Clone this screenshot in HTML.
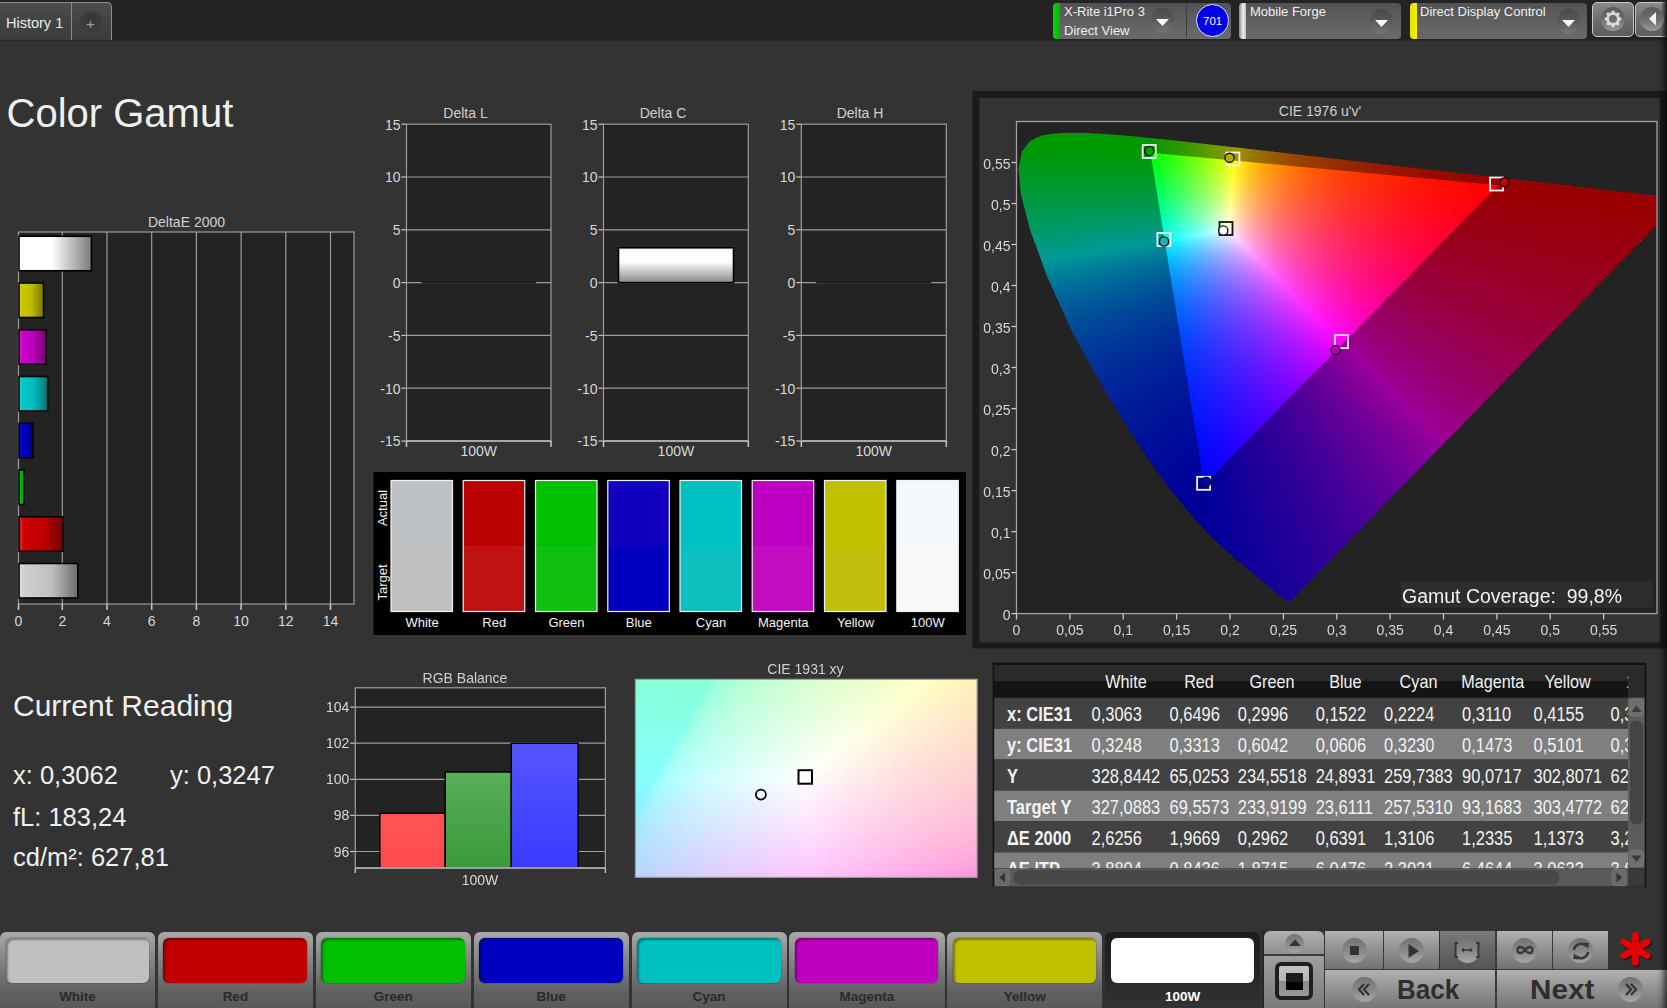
<!DOCTYPE html>
<html><head><meta charset="utf-8"><title>Color Gamut</title>
<style>
html,body{margin:0;padding:0;width:1667px;height:1008px;overflow:hidden;background:#333333;font-family:"Liberation Sans",sans-serif}
.abs{position:absolute}
.t{white-space:pre;line-height:1}
.dev{position:absolute;top:2.5px;height:36px;border-radius:4px;background:linear-gradient(#525252,#5e5e5e 40%,#6a6a6a)}
.ddc{position:absolute;width:23px;height:25px;border-radius:50%;background:linear-gradient(#484848,#5a5a5a 50%,#767676)}
.ci{position:absolute;border-radius:50%;background:linear-gradient(#727272,#888 50%,#a6a6a6)}
svg text{font-family:"Liberation Sans",sans-serif}
</style></head><body>
<div class="abs" style="left:0;top:0;width:1667px;height:40px;background:#232323"></div><div class="abs" style="left:0;top:40px;width:1667px;height:1px;background:#2b2b2b"></div>
<div class="abs" style="left:-6px;top:2px;width:118px;height:38px;border:1px solid #8e8e8e;border-bottom:none;border-radius:0 5px 0 0;background:linear-gradient(#4c4c4c,#3b3b3b);box-sizing:border-box"></div>
<div class="abs" style="left:71px;top:3px;width:1px;height:37px;background:#8a8a8a"></div>
<div class="abs" style="left:78.5px;top:11px;width:24px;height:24px;border-radius:50%;background:radial-gradient(circle at 50% 40%,#363636,#3e3e3e 70%,#474747)"></div>
<div class="abs t" style="left:6px;top:15.5px;font-size:14.5px;color:#ececec">History 1</div>
<div class="abs t" style="left:84px;top:12px;font-size:15px;color:#a0a0a0;line-height:24px;width:13px;text-align:center">+</div>
<div class="dev" style="left:1053px;width:178px"></div>
<div class="abs" style="left:1053px;top:2.5px;width:7px;height:36px;background:linear-gradient(90deg,#10d010,#00b800);border-radius:4px 0 0 4px"></div>
<div class="abs t" style="left:1064px;top:1.8px;font-size:13px;color:#f0f0f0;line-height:19px">X-Rite i1Pro 3<br>Direct View</div>
<div class="ddc" style="left:1150.8px;top:8.0px"></div><svg class="abs" style="left:1155.8px;top:19.0px" width="13" height="8"><path d="M0 0 H13 L6.5 7 Z" fill="#f8f8f8"/></svg>
<div class="abs" style="left:1186px;top:3px;width:1px;height:35px;background:#3e3e3e"></div>
<div class="abs" style="left:1196.3px;top:4.2px;width:32.6px;height:32.6px;border-radius:50%;background:#0000e6;border:1.2px solid #e8e8ff;box-sizing:border-box"></div>
<div class="abs t" style="left:1196.3px;top:5.2px;width:32.6px;line-height:32.6px;text-align:center;font-size:11.5px;color:#fff">701</div>
<div class="dev" style="left:1239px;width:162px"></div>
<div class="abs" style="left:1239px;top:2.5px;width:7px;height:36px;background:linear-gradient(90deg,#8a8a8a,#f0f0f0 60%,#bdbdbd);border-radius:4px 0 0 4px"></div>
<div class="abs t" style="left:1250px;top:1.8px;font-size:13px;color:#f0f0f0;line-height:19px">Mobile Forge</div>
<div class="ddc" style="left:1369.5px;top:8.5px"></div><svg class="abs" style="left:1374.5px;top:19.5px" width="13" height="8"><path d="M0 0 H13 L6.5 7 Z" fill="#f8f8f8"/></svg>
<div class="dev" style="left:1410px;width:177px"></div>
<div class="abs" style="left:1410px;top:2.5px;width:6.5px;height:36px;background:linear-gradient(90deg,#e0e000,#f4f400);border-radius:4px 0 0 4px"></div>
<div class="abs t" style="left:1420px;top:1.8px;font-size:13px;color:#f0f0f0;line-height:19px">Direct Display Control</div>
<div class="ddc" style="left:1556.5px;top:9.0px"></div><svg class="abs" style="left:1561.5px;top:20.0px" width="13" height="8"><path d="M0 0 H13 L6.5 7 Z" fill="#f8f8f8"/></svg>
<div class="abs" style="left:1592px;top:2px;width:42px;height:35px;border:1px solid #c8c8c8;border-radius:5px;background:linear-gradient(#8a8a8a,#6a6a6a 55%,#5e5e5e);box-sizing:border-box"></div>
<div class="abs" style="left:1601px;top:7px;width:24px;height:24px;border-radius:50%;background:linear-gradient(#5a5a5a,#6c6c6c 50%,#9a9a9a)"></div>
<svg class="abs" style="left:1593px;top:-1px" width="40" height="40"><g transform="translate(20,20)"><rect x="-1.5" y="-8.3" width="3" height="3.6" rx="0.5" transform="rotate(0)" fill="#dcdcdc"/><rect x="-1.5" y="-8.3" width="3" height="3.6" rx="0.5" transform="rotate(45)" fill="#dcdcdc"/><rect x="-1.5" y="-8.3" width="3" height="3.6" rx="0.5" transform="rotate(90)" fill="#dcdcdc"/><rect x="-1.5" y="-8.3" width="3" height="3.6" rx="0.5" transform="rotate(135)" fill="#dcdcdc"/><rect x="-1.5" y="-8.3" width="3" height="3.6" rx="0.5" transform="rotate(180)" fill="#dcdcdc"/><rect x="-1.5" y="-8.3" width="3" height="3.6" rx="0.5" transform="rotate(225)" fill="#dcdcdc"/><rect x="-1.5" y="-8.3" width="3" height="3.6" rx="0.5" transform="rotate(270)" fill="#dcdcdc"/><rect x="-1.5" y="-8.3" width="3" height="3.6" rx="0.5" transform="rotate(315)" fill="#dcdcdc"/><circle r="5.4" fill="none" stroke="#dcdcdc" stroke-width="2.7"/></g></svg>
<div class="abs" style="left:1635px;top:2px;width:40px;height:35px;border:1px solid #c8c8c8;border-radius:5px;background:linear-gradient(#8a8a8a,#6a6a6a 55%,#5e5e5e);box-sizing:border-box"></div><div class="abs" style="left:1661px;top:2px;width:6px;height:36px;background:linear-gradient(90deg,rgba(20,20,20,0),#141414)"></div>
<div class="abs" style="left:1639.5px;top:7px;width:24px;height:24px;border-radius:50%;background:linear-gradient(#5a5a5a,#6c6c6c 50%,#9a9a9a)"></div>
<svg class="abs" style="left:1647px;top:11px" width="12" height="17"><path d="M9 1 V14.5 L2 7.8 Z" fill="#f0f0f0"/></svg>
<svg class="abs" style="left:0;top:0" width="1667" height="1008" viewBox="0 0 1667 1008">
<defs><linearGradient id="bw" x1="0" y1="0" x2="1" y2="0"><stop offset="0" stop-color="#ffffff"/><stop offset="0.45" stop-color="#ffffff"/><stop offset="1" stop-color="#7c7c7c"/></linearGradient><linearGradient id="bw2" x1="0" y1="0" x2="1" y2="0"><stop offset="0" stop-color="#dcdcdc"/><stop offset="0.1" stop-color="#cfcfcf"/><stop offset="0.55" stop-color="#c0c0c0"/><stop offset="1" stop-color="#6c6c6c"/></linearGradient><linearGradient id="by" x1="0" y1="0" x2="1" y2="0"><stop offset="0" stop-color="#d0d010"/><stop offset="0.15" stop-color="#c8c800"/><stop offset="0.5" stop-color="#bcbc00"/><stop offset="1" stop-color="#7a7400"/></linearGradient><linearGradient id="bm" x1="0" y1="0" x2="1" y2="0"><stop offset="0" stop-color="#d020d0"/><stop offset="0.15" stop-color="#c800c8"/><stop offset="0.5" stop-color="#bc00bc"/><stop offset="1" stop-color="#760076"/></linearGradient><linearGradient id="bc" x1="0" y1="0" x2="1" y2="0"><stop offset="0" stop-color="#20d0d0"/><stop offset="0.15" stop-color="#00c8c8"/><stop offset="0.5" stop-color="#00bcbc"/><stop offset="1" stop-color="#007676"/></linearGradient><linearGradient id="bb" x1="0" y1="0" x2="1" y2="0"><stop offset="0" stop-color="#2020d0"/><stop offset="0.15" stop-color="#0000c8"/><stop offset="0.5" stop-color="#0000bc"/><stop offset="1" stop-color="#000076"/></linearGradient><linearGradient id="bg" x1="0" y1="0" x2="1" y2="0"><stop offset="0" stop-color="#20d020"/><stop offset="0.15" stop-color="#00c800"/><stop offset="0.5" stop-color="#00bc00"/><stop offset="1" stop-color="#007600"/></linearGradient><linearGradient id="br" x1="0" y1="0" x2="1" y2="0"><stop offset="0" stop-color="#e03030"/><stop offset="0.12" stop-color="#cc0000"/><stop offset="0.55" stop-color="#c00000"/><stop offset="1" stop-color="#700000"/></linearGradient><linearGradient id="bv" x1="0" y1="0" x2="0" y2="1"><stop offset="0" stop-color="#ffffff"/><stop offset="0.4" stop-color="#ffffff"/><stop offset="1" stop-color="#888888"/></linearGradient><linearGradient id="rr" x1="0" y1="0" x2="0" y2="1"><stop offset="0" stop-color="#ff5555"/><stop offset="1" stop-color="#ff4a4a"/></linearGradient><linearGradient id="rg" x1="0" y1="0" x2="0" y2="1"><stop offset="0" stop-color="#5aae5a"/><stop offset="1" stop-color="#3a9a3a"/></linearGradient><linearGradient id="rb" x1="0" y1="0" x2="0" y2="1"><stop offset="0" stop-color="#5555ff"/><stop offset="1" stop-color="#3a3aff"/></linearGradient></defs>
<text x="6.5" y="127" font-size="40" fill="#f0f0f0">Color Gamut</text><text x="13" y="716" font-size="30" fill="#f0f0f0">Current Reading</text><text x="13" y="784" font-size="25.5" fill="#f0f0f0">x: 0,3062</text><text x="170" y="784" font-size="25.5" fill="#f0f0f0">y: 0,3247</text><text x="13" y="825.5" font-size="25.5" fill="#f0f0f0">fL: 183,24</text><text x="13" y="865.5" font-size="25.5" fill="#f0f0f0">cd/m²: 627,81</text>
<text x="186.5" y="226.5" font-size="14" fill="#d0d0d0" text-anchor="middle" font-weight="400" >DeltaE 2000</text>
<rect x="18.5" y="232" width="335.5" height="372" fill="#232323" stroke="#9c9c9c" stroke-width="1.2"/>
<line x1="62.3" y1="232" x2="62.3" y2="604" stroke="#9c9c9c" stroke-width="1.2"/>
<line x1="107.0" y1="232" x2="107.0" y2="604" stroke="#9c9c9c" stroke-width="1.2"/>
<line x1="151.7" y1="232" x2="151.7" y2="604" stroke="#9c9c9c" stroke-width="1.2"/>
<line x1="196.4" y1="232" x2="196.4" y2="604" stroke="#9c9c9c" stroke-width="1.2"/>
<line x1="241.1" y1="232" x2="241.1" y2="604" stroke="#9c9c9c" stroke-width="1.2"/>
<line x1="285.8" y1="232" x2="285.8" y2="604" stroke="#9c9c9c" stroke-width="1.2"/>
<line x1="330.5" y1="232" x2="330.5" y2="604" stroke="#9c9c9c" stroke-width="1.2"/>
<line x1="18.5" y1="604" x2="18.5" y2="610" stroke="#c8c8c8" stroke-width="1.5"/>
<text x="18.5" y="625.5" font-size="14" fill="#d8d8d8" text-anchor="middle" font-weight="400" >0</text>
<line x1="62.3" y1="604" x2="62.3" y2="610" stroke="#c8c8c8" stroke-width="1.5"/>
<text x="62.3" y="625.5" font-size="14" fill="#d8d8d8" text-anchor="middle" font-weight="400" >2</text>
<line x1="107.0" y1="604" x2="107.0" y2="610" stroke="#c8c8c8" stroke-width="1.5"/>
<text x="107.0" y="625.5" font-size="14" fill="#d8d8d8" text-anchor="middle" font-weight="400" >4</text>
<line x1="151.7" y1="604" x2="151.7" y2="610" stroke="#c8c8c8" stroke-width="1.5"/>
<text x="151.7" y="625.5" font-size="14" fill="#d8d8d8" text-anchor="middle" font-weight="400" >6</text>
<line x1="196.4" y1="604" x2="196.4" y2="610" stroke="#c8c8c8" stroke-width="1.5"/>
<text x="196.4" y="625.5" font-size="14" fill="#d8d8d8" text-anchor="middle" font-weight="400" >8</text>
<line x1="241.1" y1="604" x2="241.1" y2="610" stroke="#c8c8c8" stroke-width="1.5"/>
<text x="241.1" y="625.5" font-size="14" fill="#d8d8d8" text-anchor="middle" font-weight="400" >10</text>
<line x1="285.8" y1="604" x2="285.8" y2="610" stroke="#c8c8c8" stroke-width="1.5"/>
<text x="285.8" y="625.5" font-size="14" fill="#d8d8d8" text-anchor="middle" font-weight="400" >12</text>
<line x1="330.5" y1="604" x2="330.5" y2="610" stroke="#c8c8c8" stroke-width="1.5"/>
<text x="330.5" y="625.5" font-size="14" fill="#d8d8d8" text-anchor="middle" font-weight="400" >14</text>
<rect x="19.0" y="236.25" width="72.4" height="34.5" fill="url(#bw)" stroke="#000" stroke-width="1.6"/>
<rect x="19.0" y="283.00" width="24.6" height="34.5" fill="url(#by)" stroke="#000" stroke-width="1.6"/>
<rect x="19.0" y="329.75" width="27.2" height="34.5" fill="url(#bm)" stroke="#000" stroke-width="1.6"/>
<rect x="19.0" y="376.50" width="28.6" height="34.5" fill="url(#bc)" stroke="#000" stroke-width="1.6"/>
<rect x="19.0" y="423.25" width="13.8" height="34.5" fill="url(#bb)" stroke="#000" stroke-width="1.6"/>
<rect x="19.0" y="470.00" width="5.1" height="34.5" fill="url(#bg)" stroke="#000" stroke-width="1.6"/>
<rect x="19.0" y="516.75" width="44.2" height="34.5" fill="url(#br)" stroke="#000" stroke-width="1.6"/>
<rect x="19.0" y="563.50" width="58.8" height="34.5" fill="url(#bw2)" stroke="#000" stroke-width="1.6"/>
<text x="465.5" y="118" font-size="14" fill="#d0d0d0" text-anchor="middle" font-weight="400" >Delta L</text>
<rect x="406.5" y="124.2" width="144.5" height="316.8" fill="#232323"/>
<line x1="406.5" y1="177.0" x2="551" y2="177.0" stroke="#9c9c9c" stroke-width="1.2"/>
<line x1="406.5" y1="229.8" x2="551" y2="229.8" stroke="#9c9c9c" stroke-width="1.2"/>
<line x1="406.5" y1="282.6" x2="551" y2="282.6" stroke="#9c9c9c" stroke-width="1.2"/>
<line x1="406.5" y1="335.4" x2="551" y2="335.4" stroke="#9c9c9c" stroke-width="1.2"/>
<line x1="406.5" y1="388.2" x2="551" y2="388.2" stroke="#9c9c9c" stroke-width="1.2"/>
<line x1="401.5" y1="124.2" x2="406.5" y2="124.2" stroke="#c8c8c8" stroke-width="1.2"/>
<text x="400.5" y="129.5" font-size="14" fill="#d8d8d8" text-anchor="end" font-weight="400" >15</text>
<line x1="401.5" y1="177.0" x2="406.5" y2="177.0" stroke="#c8c8c8" stroke-width="1.2"/>
<text x="400.5" y="182.3" font-size="14" fill="#d8d8d8" text-anchor="end" font-weight="400" >10</text>
<line x1="401.5" y1="229.8" x2="406.5" y2="229.8" stroke="#c8c8c8" stroke-width="1.2"/>
<text x="400.5" y="235.1" font-size="14" fill="#d8d8d8" text-anchor="end" font-weight="400" >5</text>
<line x1="401.5" y1="282.6" x2="406.5" y2="282.6" stroke="#c8c8c8" stroke-width="1.2"/>
<text x="400.5" y="287.9" font-size="14" fill="#d8d8d8" text-anchor="end" font-weight="400" >0</text>
<line x1="401.5" y1="335.4" x2="406.5" y2="335.4" stroke="#c8c8c8" stroke-width="1.2"/>
<text x="400.5" y="340.7" font-size="14" fill="#d8d8d8" text-anchor="end" font-weight="400" >-5</text>
<line x1="401.5" y1="388.2" x2="406.5" y2="388.2" stroke="#c8c8c8" stroke-width="1.2"/>
<text x="400.5" y="393.5" font-size="14" fill="#d8d8d8" text-anchor="end" font-weight="400" >-10</text>
<line x1="401.5" y1="441.0" x2="406.5" y2="441.0" stroke="#c8c8c8" stroke-width="1.2"/>
<text x="400.5" y="446.3" font-size="14" fill="#d8d8d8" text-anchor="end" font-weight="400" >-15</text>
<rect x="406.5" y="124.2" width="144.5" height="316.8" fill="none" stroke="#9c9c9c" stroke-width="1.2"/>
<line x1="406.5" y1="441.0" x2="551" y2="441.0" stroke="#a8a8a8" stroke-width="2"/>
<line x1="406.5" y1="441.0" x2="406.5" y2="447.0" stroke="#c8c8c8" stroke-width="1.5"/>
<line x1="551" y1="441.0" x2="551" y2="447.0" stroke="#c8c8c8" stroke-width="1.5"/>
<text x="478.8" y="456" font-size="14" fill="#d8d8d8" text-anchor="middle" font-weight="400" >100W</text>
<line x1="421.5" y1="282.6" x2="536" y2="282.6" stroke="#1a1a1a" stroke-width="1.5"/>
<text x="663" y="118" font-size="14" fill="#d0d0d0" text-anchor="middle" font-weight="400" >Delta C</text>
<rect x="603.5" y="124.2" width="144.8" height="316.8" fill="#232323"/>
<line x1="603.5" y1="177.0" x2="748.3" y2="177.0" stroke="#9c9c9c" stroke-width="1.2"/>
<line x1="603.5" y1="229.8" x2="748.3" y2="229.8" stroke="#9c9c9c" stroke-width="1.2"/>
<line x1="603.5" y1="282.6" x2="748.3" y2="282.6" stroke="#9c9c9c" stroke-width="1.2"/>
<line x1="603.5" y1="335.4" x2="748.3" y2="335.4" stroke="#9c9c9c" stroke-width="1.2"/>
<line x1="603.5" y1="388.2" x2="748.3" y2="388.2" stroke="#9c9c9c" stroke-width="1.2"/>
<line x1="598.5" y1="124.2" x2="603.5" y2="124.2" stroke="#c8c8c8" stroke-width="1.2"/>
<text x="597.5" y="129.5" font-size="14" fill="#d8d8d8" text-anchor="end" font-weight="400" >15</text>
<line x1="598.5" y1="177.0" x2="603.5" y2="177.0" stroke="#c8c8c8" stroke-width="1.2"/>
<text x="597.5" y="182.3" font-size="14" fill="#d8d8d8" text-anchor="end" font-weight="400" >10</text>
<line x1="598.5" y1="229.8" x2="603.5" y2="229.8" stroke="#c8c8c8" stroke-width="1.2"/>
<text x="597.5" y="235.1" font-size="14" fill="#d8d8d8" text-anchor="end" font-weight="400" >5</text>
<line x1="598.5" y1="282.6" x2="603.5" y2="282.6" stroke="#c8c8c8" stroke-width="1.2"/>
<text x="597.5" y="287.9" font-size="14" fill="#d8d8d8" text-anchor="end" font-weight="400" >0</text>
<line x1="598.5" y1="335.4" x2="603.5" y2="335.4" stroke="#c8c8c8" stroke-width="1.2"/>
<text x="597.5" y="340.7" font-size="14" fill="#d8d8d8" text-anchor="end" font-weight="400" >-5</text>
<line x1="598.5" y1="388.2" x2="603.5" y2="388.2" stroke="#c8c8c8" stroke-width="1.2"/>
<text x="597.5" y="393.5" font-size="14" fill="#d8d8d8" text-anchor="end" font-weight="400" >-10</text>
<line x1="598.5" y1="441.0" x2="603.5" y2="441.0" stroke="#c8c8c8" stroke-width="1.2"/>
<text x="597.5" y="446.3" font-size="14" fill="#d8d8d8" text-anchor="end" font-weight="400" >-15</text>
<rect x="603.5" y="124.2" width="144.8" height="316.8" fill="none" stroke="#9c9c9c" stroke-width="1.2"/>
<line x1="603.5" y1="441.0" x2="748.3" y2="441.0" stroke="#a8a8a8" stroke-width="2"/>
<line x1="603.5" y1="441.0" x2="603.5" y2="447.0" stroke="#c8c8c8" stroke-width="1.5"/>
<line x1="748.3" y1="441.0" x2="748.3" y2="447.0" stroke="#c8c8c8" stroke-width="1.5"/>
<text x="675.9" y="456" font-size="14" fill="#d8d8d8" text-anchor="middle" font-weight="400" >100W</text>
<rect x="618.5" y="247.8" width="115.0" height="34.8" fill="url(#bv)" stroke="#000" stroke-width="1.6"/>
<text x="860" y="118" font-size="14" fill="#d0d0d0" text-anchor="middle" font-weight="400" >Delta H</text>
<rect x="801.3" y="124.2" width="145.0" height="316.8" fill="#232323"/>
<line x1="801.3" y1="177.0" x2="946.3" y2="177.0" stroke="#9c9c9c" stroke-width="1.2"/>
<line x1="801.3" y1="229.8" x2="946.3" y2="229.8" stroke="#9c9c9c" stroke-width="1.2"/>
<line x1="801.3" y1="282.6" x2="946.3" y2="282.6" stroke="#9c9c9c" stroke-width="1.2"/>
<line x1="801.3" y1="335.4" x2="946.3" y2="335.4" stroke="#9c9c9c" stroke-width="1.2"/>
<line x1="801.3" y1="388.2" x2="946.3" y2="388.2" stroke="#9c9c9c" stroke-width="1.2"/>
<line x1="796.3" y1="124.2" x2="801.3" y2="124.2" stroke="#c8c8c8" stroke-width="1.2"/>
<text x="795.3" y="129.5" font-size="14" fill="#d8d8d8" text-anchor="end" font-weight="400" >15</text>
<line x1="796.3" y1="177.0" x2="801.3" y2="177.0" stroke="#c8c8c8" stroke-width="1.2"/>
<text x="795.3" y="182.3" font-size="14" fill="#d8d8d8" text-anchor="end" font-weight="400" >10</text>
<line x1="796.3" y1="229.8" x2="801.3" y2="229.8" stroke="#c8c8c8" stroke-width="1.2"/>
<text x="795.3" y="235.1" font-size="14" fill="#d8d8d8" text-anchor="end" font-weight="400" >5</text>
<line x1="796.3" y1="282.6" x2="801.3" y2="282.6" stroke="#c8c8c8" stroke-width="1.2"/>
<text x="795.3" y="287.9" font-size="14" fill="#d8d8d8" text-anchor="end" font-weight="400" >0</text>
<line x1="796.3" y1="335.4" x2="801.3" y2="335.4" stroke="#c8c8c8" stroke-width="1.2"/>
<text x="795.3" y="340.7" font-size="14" fill="#d8d8d8" text-anchor="end" font-weight="400" >-5</text>
<line x1="796.3" y1="388.2" x2="801.3" y2="388.2" stroke="#c8c8c8" stroke-width="1.2"/>
<text x="795.3" y="393.5" font-size="14" fill="#d8d8d8" text-anchor="end" font-weight="400" >-10</text>
<line x1="796.3" y1="441.0" x2="801.3" y2="441.0" stroke="#c8c8c8" stroke-width="1.2"/>
<text x="795.3" y="446.3" font-size="14" fill="#d8d8d8" text-anchor="end" font-weight="400" >-15</text>
<rect x="801.3" y="124.2" width="145.0" height="316.8" fill="none" stroke="#9c9c9c" stroke-width="1.2"/>
<line x1="801.3" y1="441.0" x2="946.3" y2="441.0" stroke="#a8a8a8" stroke-width="2"/>
<line x1="801.3" y1="441.0" x2="801.3" y2="447.0" stroke="#c8c8c8" stroke-width="1.5"/>
<line x1="946.3" y1="441.0" x2="946.3" y2="447.0" stroke="#c8c8c8" stroke-width="1.5"/>
<text x="873.8" y="456" font-size="14" fill="#d8d8d8" text-anchor="middle" font-weight="400" >100W</text>
<line x1="816.3" y1="282.6" x2="931.3" y2="282.6" stroke="#1a1a1a" stroke-width="1.5"/>
<rect x="373.5" y="472" width="592.5" height="163" fill="#000"/>
<rect x="391.0" y="480.5" width="61.5" height="65.5" fill="#bec2c5"/>
<rect x="391.0" y="546" width="61.5" height="65.5" fill="#c0c0c0"/>
<rect x="391.0" y="480.5" width="61.5" height="131" fill="none" stroke="#f0f0f0" stroke-width="1.2"/>
<text x="422.0" y="627" font-size="13" fill="#f4f4f4" text-anchor="middle" font-weight="400" >White</text>
<rect x="463.2" y="480.5" width="61.5" height="65.5" fill="#ba0000"/>
<rect x="463.2" y="546" width="61.5" height="65.5" fill="#c01212"/>
<rect x="463.2" y="480.5" width="61.5" height="131" fill="none" stroke="#f0f0f0" stroke-width="1.2"/>
<text x="494.2" y="627" font-size="13" fill="#f4f4f4" text-anchor="middle" font-weight="400" >Red</text>
<rect x="535.5" y="480.5" width="61.5" height="65.5" fill="#00c000"/>
<rect x="535.5" y="546" width="61.5" height="65.5" fill="#10c010"/>
<rect x="535.5" y="480.5" width="61.5" height="131" fill="none" stroke="#f0f0f0" stroke-width="1.2"/>
<text x="566.5" y="627" font-size="13" fill="#f4f4f4" text-anchor="middle" font-weight="400" >Green</text>
<rect x="607.8" y="480.5" width="61.5" height="65.5" fill="#1200c0"/>
<rect x="607.8" y="546" width="61.5" height="65.5" fill="#0000c0"/>
<rect x="607.8" y="480.5" width="61.5" height="131" fill="none" stroke="#f0f0f0" stroke-width="1.2"/>
<text x="638.8" y="627" font-size="13" fill="#f4f4f4" text-anchor="middle" font-weight="400" >Blue</text>
<rect x="680.0" y="480.5" width="61.5" height="65.5" fill="#00c0c3"/>
<rect x="680.0" y="546" width="61.5" height="65.5" fill="#0cc0c0"/>
<rect x="680.0" y="480.5" width="61.5" height="131" fill="none" stroke="#f0f0f0" stroke-width="1.2"/>
<text x="711.0" y="627" font-size="13" fill="#f4f4f4" text-anchor="middle" font-weight="400" >Cyan</text>
<rect x="752.2" y="480.5" width="61.5" height="65.5" fill="#bc00c2"/>
<rect x="752.2" y="546" width="61.5" height="65.5" fill="#c10cc0"/>
<rect x="752.2" y="480.5" width="61.5" height="131" fill="none" stroke="#f0f0f0" stroke-width="1.2"/>
<text x="783.2" y="627" font-size="13" fill="#f4f4f4" text-anchor="middle" font-weight="400" >Magenta</text>
<rect x="824.5" y="480.5" width="61.5" height="65.5" fill="#c0c000"/>
<rect x="824.5" y="546" width="61.5" height="65.5" fill="#c0c00c"/>
<rect x="824.5" y="480.5" width="61.5" height="131" fill="none" stroke="#f0f0f0" stroke-width="1.2"/>
<text x="855.5" y="627" font-size="13" fill="#f4f4f4" text-anchor="middle" font-weight="400" >Yellow</text>
<rect x="896.8" y="480.5" width="61.5" height="65.5" fill="#f3f8fb"/>
<rect x="896.8" y="546" width="61.5" height="65.5" fill="#f8f8f8"/>
<rect x="896.8" y="480.5" width="61.5" height="131" fill="none" stroke="#f0f0f0" stroke-width="1.2"/>
<text x="927.8" y="627" font-size="13" fill="#f4f4f4" text-anchor="middle" font-weight="400" >100W</text>
<text x="0" y="0" font-size="13" fill="#f4f4f4" text-anchor="middle" font-weight="400" transform="translate(386.5,508) rotate(-90)">Actual</text>
<text x="0" y="0" font-size="13" fill="#f4f4f4" text-anchor="middle" font-weight="400" transform="translate(386.5,582.5) rotate(-90)">Target</text>
<rect x="972.5" y="91" width="694.5" height="557.5" fill="#1b1b1b"/>
<rect x="979.3" y="98" width="680.7" height="544.5" fill="#333333"/>
<text x="1320" y="116" font-size="14" fill="#d0d0d0" text-anchor="middle" font-weight="400" >CIE 1976 u'v'</text>
<rect x="1016.5" y="121.5" width="640.5" height="492.1" fill="#232323"/>
<g id="fb76"><defs><linearGradient id="fbg1" x1="0" y1="0" x2="0.3" y2="1"><stop offset="0" stop-color="#009a08"/><stop offset="0.35" stop-color="#009080"/><stop offset="0.7" stop-color="#0020a0"/><stop offset="1" stop-color="#10009a"/></linearGradient><linearGradient id="fbg3" x1="0" y1="0" x2="1" y2="0"><stop offset="0.3" stop-color="#600090" stop-opacity="0"/><stop offset="0.55" stop-color="#7a0098" stop-opacity="0.85"/><stop offset="1" stop-color="#990010" stop-opacity="1"/></linearGradient><linearGradient id="fbg2" x1="0" y1="0" x2="1" y2="0.2"><stop offset="0" stop-color="#40ff60"/><stop offset="0.35" stop-color="#f0f0f0"/><stop offset="0.65" stop-color="#ff60c0"/><stop offset="1" stop-color="#ff1020"/></linearGradient><linearGradient id="fbg4" x1="0" y1="0" x2="0" y2="1"><stop offset="0.45" stop-color="#3030ff" stop-opacity="0"/><stop offset="1" stop-color="#1010ff" stop-opacity="1"/></linearGradient></defs><path d="M1290.6 600.0 L1289.5 600.5 L1285.7 599.8 L1279.2 595.0 L1267.0 584.9 L1247.1 568.5 L1216.9 542.1 L1170.3 489.8 L1138.9 446.0 L1104.9 391.5 L1072.2 332.5 L1046.6 275.9 L1029.2 228.2 L1020.2 192.8 L1018.0 168.1 L1021.5 151.1 L1029.6 140.4 L1041.2 134.9 L1054.9 132.8 L1069.9 132.3 L1101.1 133.3 L1136.8 136.2 L1179.9 140.7 L1232.8 146.6 L1296.6 153.9 L1447.2 171.2 L1571.9 185.5 L1638.9 193.2 L1657.0 198.2 Z" fill="url(#fbg1)"/><path d="M1290.6 600.0 L1289.5 600.5 L1285.7 599.8 L1279.2 595.0 L1267.0 584.9 L1247.1 568.5 L1216.9 542.1 L1170.3 489.8 L1138.9 446.0 L1104.9 391.5 L1072.2 332.5 L1046.6 275.9 L1029.2 228.2 L1020.2 192.8 L1018.0 168.1 L1021.5 151.1 L1029.6 140.4 L1041.2 134.9 L1054.9 132.8 L1069.9 132.3 L1101.1 133.3 L1136.8 136.2 L1179.9 140.7 L1232.8 146.6 L1296.6 153.9 L1447.2 171.2 L1571.9 185.5 L1638.9 193.2 L1657.0 198.2 Z" fill="url(#fbg3)"/><path d="M1497.6 184.7 L1149.9 152.2 L1203.8 484.1 Z" fill="url(#fbg2)"/><path d="M1497.6 184.7 L1149.9 152.2 L1203.8 484.1 Z" fill="url(#fbg4)"/></g><foreignObject x="1016.5" y="121.5" width="640.5" height="492.1"><canvas id="cv76" width="640" height="492" style="width:640.5px;height:492.1px;display:block"></canvas></foreignObject>
<rect x="1142.7" y="145.0" width="13" height="13" fill="none" stroke="#f4f4f4" stroke-width="1.8"/>
<circle cx="1149.2" cy="151" r="4.6" fill="#009c00" stroke="#111" stroke-width="1.4"/>
<rect x="1226.4" y="152.5" width="13" height="13" fill="none" stroke="#f4f4f4" stroke-width="1.8"/>
<circle cx="1229.5" cy="157.8" r="4.6" fill="#b4ac00" stroke="#111" stroke-width="1.4"/>
<rect x="1490.1" y="177.5" width="13" height="13" fill="none" stroke="#f4f4f4" stroke-width="1.8"/>
<circle cx="1504.5" cy="182.3" r="4.6" fill="#c80000" stroke="#111" stroke-width="1.4"/>
<rect x="1219.5" y="222.0" width="13" height="13" fill="none" stroke="#111" stroke-width="1.8"/>
<circle cx="1223.3" cy="230.5" r="4.6" fill="#ffffff" stroke="#111" stroke-width="1.4"/>
<rect x="1157.4" y="233.0" width="13" height="13" fill="none" stroke="#f4f4f4" stroke-width="1.8"/>
<circle cx="1164" cy="241.5" r="4.6" fill="#1eb0b4" stroke="#111" stroke-width="1.4"/>
<rect x="1335.0" y="335.1" width="13" height="13" fill="none" stroke="#f4f4f4" stroke-width="1.8"/>
<circle cx="1335.5" cy="350" r="4.6" fill="#b000b4" stroke="#111" stroke-width="1.4"/>
<rect x="1197.1" y="476.8" width="13" height="13" fill="none" stroke="#f4f4f4" stroke-width="1.8"/>
<circle cx="1206.3" cy="481.8" r="4.6" fill="#0000c8" stroke="#111" stroke-width="1.4"/>
<rect x="1016.5" y="121.5" width="640.5" height="492.1" fill="none" stroke="#a0a0a0" stroke-width="1.3"/>
<line x1="1011.5" y1="613.6" x2="1016.5" y2="613.6" stroke="#c8c8c8" stroke-width="1.3"/>
<text x="1010.5" y="619.9" font-size="14" fill="#d8d8d8" text-anchor="end" font-weight="400" >0</text>
<line x1="1016.5" y1="613.6" x2="1016.5" y2="619.6" stroke="#c8c8c8" stroke-width="1.3"/>
<text x="1016.5" y="635" font-size="14" fill="#d8d8d8" text-anchor="middle" font-weight="400" >0</text>
<line x1="1011.5" y1="572.6" x2="1016.5" y2="572.6" stroke="#c8c8c8" stroke-width="1.3"/>
<text x="1010.5" y="578.9" font-size="14" fill="#d8d8d8" text-anchor="end" font-weight="400" >0,05</text>
<line x1="1069.9" y1="613.6" x2="1069.9" y2="619.6" stroke="#c8c8c8" stroke-width="1.3"/>
<text x="1069.9" y="635" font-size="14" fill="#d8d8d8" text-anchor="middle" font-weight="400" >0,05</text>
<line x1="1011.5" y1="531.6" x2="1016.5" y2="531.6" stroke="#c8c8c8" stroke-width="1.3"/>
<text x="1010.5" y="537.9" font-size="14" fill="#d8d8d8" text-anchor="end" font-weight="400" >0,1</text>
<line x1="1123.2" y1="613.6" x2="1123.2" y2="619.6" stroke="#c8c8c8" stroke-width="1.3"/>
<text x="1123.2" y="635" font-size="14" fill="#d8d8d8" text-anchor="middle" font-weight="400" >0,1</text>
<line x1="1011.5" y1="490.6" x2="1016.5" y2="490.6" stroke="#c8c8c8" stroke-width="1.3"/>
<text x="1010.5" y="496.9" font-size="14" fill="#d8d8d8" text-anchor="end" font-weight="400" >0,15</text>
<line x1="1176.6" y1="613.6" x2="1176.6" y2="619.6" stroke="#c8c8c8" stroke-width="1.3"/>
<text x="1176.6" y="635" font-size="14" fill="#d8d8d8" text-anchor="middle" font-weight="400" >0,15</text>
<line x1="1011.5" y1="449.6" x2="1016.5" y2="449.6" stroke="#c8c8c8" stroke-width="1.3"/>
<text x="1010.5" y="455.9" font-size="14" fill="#d8d8d8" text-anchor="end" font-weight="400" >0,2</text>
<line x1="1230.0" y1="613.6" x2="1230.0" y2="619.6" stroke="#c8c8c8" stroke-width="1.3"/>
<text x="1230.0" y="635" font-size="14" fill="#d8d8d8" text-anchor="middle" font-weight="400" >0,2</text>
<line x1="1011.5" y1="408.6" x2="1016.5" y2="408.6" stroke="#c8c8c8" stroke-width="1.3"/>
<text x="1010.5" y="414.9" font-size="14" fill="#d8d8d8" text-anchor="end" font-weight="400" >0,25</text>
<line x1="1283.4" y1="613.6" x2="1283.4" y2="619.6" stroke="#c8c8c8" stroke-width="1.3"/>
<text x="1283.4" y="635" font-size="14" fill="#d8d8d8" text-anchor="middle" font-weight="400" >0,25</text>
<line x1="1011.5" y1="367.5" x2="1016.5" y2="367.5" stroke="#c8c8c8" stroke-width="1.3"/>
<text x="1010.5" y="373.8" font-size="14" fill="#d8d8d8" text-anchor="end" font-weight="400" >0,3</text>
<line x1="1336.8" y1="613.6" x2="1336.8" y2="619.6" stroke="#c8c8c8" stroke-width="1.3"/>
<text x="1336.8" y="635" font-size="14" fill="#d8d8d8" text-anchor="middle" font-weight="400" >0,3</text>
<line x1="1011.5" y1="326.5" x2="1016.5" y2="326.5" stroke="#c8c8c8" stroke-width="1.3"/>
<text x="1010.5" y="332.8" font-size="14" fill="#d8d8d8" text-anchor="end" font-weight="400" >0,35</text>
<line x1="1390.1" y1="613.6" x2="1390.1" y2="619.6" stroke="#c8c8c8" stroke-width="1.3"/>
<text x="1390.1" y="635" font-size="14" fill="#d8d8d8" text-anchor="middle" font-weight="400" >0,35</text>
<line x1="1011.5" y1="285.5" x2="1016.5" y2="285.5" stroke="#c8c8c8" stroke-width="1.3"/>
<text x="1010.5" y="291.8" font-size="14" fill="#d8d8d8" text-anchor="end" font-weight="400" >0,4</text>
<line x1="1443.5" y1="613.6" x2="1443.5" y2="619.6" stroke="#c8c8c8" stroke-width="1.3"/>
<text x="1443.5" y="635" font-size="14" fill="#d8d8d8" text-anchor="middle" font-weight="400" >0,4</text>
<line x1="1011.5" y1="244.5" x2="1016.5" y2="244.5" stroke="#c8c8c8" stroke-width="1.3"/>
<text x="1010.5" y="250.8" font-size="14" fill="#d8d8d8" text-anchor="end" font-weight="400" >0,45</text>
<line x1="1496.9" y1="613.6" x2="1496.9" y2="619.6" stroke="#c8c8c8" stroke-width="1.3"/>
<text x="1496.9" y="635" font-size="14" fill="#d8d8d8" text-anchor="middle" font-weight="400" >0,45</text>
<line x1="1011.5" y1="203.5" x2="1016.5" y2="203.5" stroke="#c8c8c8" stroke-width="1.3"/>
<text x="1010.5" y="209.8" font-size="14" fill="#d8d8d8" text-anchor="end" font-weight="400" >0,5</text>
<line x1="1550.2" y1="613.6" x2="1550.2" y2="619.6" stroke="#c8c8c8" stroke-width="1.3"/>
<text x="1550.2" y="635" font-size="14" fill="#d8d8d8" text-anchor="middle" font-weight="400" >0,5</text>
<line x1="1011.5" y1="162.5" x2="1016.5" y2="162.5" stroke="#c8c8c8" stroke-width="1.3"/>
<text x="1010.5" y="168.8" font-size="14" fill="#d8d8d8" text-anchor="end" font-weight="400" >0,55</text>
<line x1="1603.6" y1="613.6" x2="1603.6" y2="619.6" stroke="#c8c8c8" stroke-width="1.3"/>
<text x="1603.6" y="635" font-size="14" fill="#d8d8d8" text-anchor="middle" font-weight="400" >0,55</text>
<rect x="1401" y="581.3" width="252" height="26.5" fill="#2d2d2d"/>
<text x="1402" y="602.5" font-size="19.5" fill="#f2f2f2" xml:space="preserve">Gamut Coverage:  99,8%</text>
<text x="465" y="682.5" font-size="14" fill="#d0d0d0" text-anchor="middle" font-weight="400" >RGB Balance</text>
<rect x="355.3" y="687.8" width="250.1" height="180.2" fill="#232323"/>
<line x1="355.3" y1="707.1" x2="605.4" y2="707.1" stroke="#a0a0a0" stroke-width="1.2"/>
<line x1="350.3" y1="707.1" x2="355.3" y2="707.1" stroke="#c8c8c8" stroke-width="1.2"/>
<text x="349.3" y="712.1" font-size="14" fill="#d8d8d8" text-anchor="end" font-weight="400" >104</text>
<line x1="355.3" y1="743.2" x2="605.4" y2="743.2" stroke="#a0a0a0" stroke-width="1.2"/>
<line x1="350.3" y1="743.2" x2="355.3" y2="743.2" stroke="#c8c8c8" stroke-width="1.2"/>
<text x="349.3" y="748.2" font-size="14" fill="#d8d8d8" text-anchor="end" font-weight="400" >102</text>
<line x1="355.3" y1="779.3" x2="605.4" y2="779.3" stroke="#a0a0a0" stroke-width="1.2"/>
<line x1="350.3" y1="779.3" x2="355.3" y2="779.3" stroke="#c8c8c8" stroke-width="1.2"/>
<text x="349.3" y="784.3" font-size="14" fill="#d8d8d8" text-anchor="end" font-weight="400" >100</text>
<line x1="355.3" y1="815.4" x2="605.4" y2="815.4" stroke="#a0a0a0" stroke-width="1.2"/>
<line x1="350.3" y1="815.4" x2="355.3" y2="815.4" stroke="#c8c8c8" stroke-width="1.2"/>
<text x="349.3" y="820.4" font-size="14" fill="#d8d8d8" text-anchor="end" font-weight="400" >98</text>
<line x1="355.3" y1="851.5" x2="605.4" y2="851.5" stroke="#a0a0a0" stroke-width="1.2"/>
<line x1="350.3" y1="851.5" x2="355.3" y2="851.5" stroke="#c8c8c8" stroke-width="1.2"/>
<text x="349.3" y="856.5" font-size="14" fill="#d8d8d8" text-anchor="end" font-weight="400" >96</text>
<rect x="379.8" y="813.3" width="65.4" height="54.7" fill="url(#rr)" stroke="#000" stroke-width="1.5"/>
<rect x="445.2" y="772.0" width="66.1" height="96.0" fill="url(#rg)" stroke="#000" stroke-width="1.5"/>
<rect x="511.3" y="743.3" width="66.9" height="124.7" fill="url(#rb)" stroke="#000" stroke-width="1.5"/>
<rect x="355.3" y="687.8" width="250.1" height="180.2" fill="none" stroke="#a0a0a0" stroke-width="1.2"/>
<line x1="355.3" y1="868.0" x2="605.4" y2="868.0" stroke="#b0b0b0" stroke-width="1.6"/>
<line x1="355.3" y1="868.0" x2="355.3" y2="873.0" stroke="#c8c8c8" stroke-width="1.3"/>
<line x1="605.4" y1="868.0" x2="605.4" y2="873.0" stroke="#c8c8c8" stroke-width="1.3"/>
<text x="480" y="884.5" font-size="14" fill="#d8d8d8" text-anchor="middle" font-weight="400" >100W</text>
<text x="805.5" y="674" font-size="14" fill="#d0d0d0" text-anchor="middle" font-weight="400" >CIE 1931 xy</text>
<defs><linearGradient id="xyg1" x1="0" y1="0" x2="1" y2="1"><stop offset="0" stop-color="#88ffd8"/><stop offset="0.5" stop-color="#f8fcff"/><stop offset="1" stop-color="#ff98c8"/></linearGradient><linearGradient id="xyg2" x1="1" y1="0" x2="0" y2="1"><stop offset="0" stop-color="#ffe8b0" stop-opacity="0.9"/><stop offset="0.5" stop-color="#ffffff" stop-opacity="0"/><stop offset="1" stop-color="#b0d0ff" stop-opacity="0.9"/></linearGradient></defs><rect x="635.4" y="679.3" width="341.7" height="198.1" fill="url(#xyg1)"/><rect x="635.4" y="679.3" width="341.7" height="198.1" fill="url(#xyg2)"/><foreignObject x="635.4" y="679.3" width="341.7" height="198.1"><canvas id="cv31" width="342" height="198" style="width:341.7px;height:198.1px;display:block"></canvas></foreignObject>
<rect x="635.4" y="679.3" width="341.7" height="198.1" fill="none" stroke="#9a9a9a" stroke-width="1.2"/>
<rect x="798.5" y="770.2" width="13.5" height="13.5" fill="none" stroke="#000" stroke-width="2"/>
<circle cx="760.9" cy="794.6" r="5" fill="none" stroke="#000" stroke-width="1.8"/>
<rect x="992.6" y="662.8" width="653.4" height="223.6" fill="#121212"/><rect x="1644.7" y="662.8" width="1.5" height="225.5" fill="#121212"/>
<rect x="994.2" y="665" width="650.5" height="16" fill="#2a2a2a"/>
<rect x="994.2" y="681" width="634" height="16.6" fill="#141414"/>
<rect x="1628" y="681" width="16.7" height="17" fill="#2a2a2a"/>
<rect x="994.2" y="697.8" width="634" height="30.9" fill="#424242"/>
<rect x="994.2" y="728.7" width="634" height="30.9" fill="#7f7f7f"/>
<rect x="994.2" y="759.6" width="634" height="30.9" fill="#424242"/>
<rect x="994.2" y="790.5" width="634" height="30.9" fill="#7f7f7f"/>
<rect x="994.2" y="821.4" width="634" height="30.9" fill="#424242"/>
<rect x="994.2" y="852.3" width="634" height="16.1" fill="#7f7f7f"/>
<clipPath id="tclip"><rect x="994.2" y="665" width="634" height="203.4"/></clipPath>
<g clip-path="url(#tclip)" fill="#f2f2f2" font-size="19.4">
<text transform="translate(1126,688) scale(0.9,1)" font-size="18" text-anchor="middle">White</text>
<text transform="translate(1199,688) scale(0.9,1)" font-size="18" text-anchor="middle">Red</text>
<text transform="translate(1272,688) scale(0.9,1)" font-size="18" text-anchor="middle">Green</text>
<text transform="translate(1345.4,688) scale(0.9,1)" font-size="18" text-anchor="middle">Blue</text>
<text transform="translate(1418.5,688) scale(0.9,1)" font-size="18" text-anchor="middle">Cyan</text>
<text transform="translate(1492.8,688) scale(0.9,1)" font-size="18" text-anchor="middle">Magenta</text>
<text transform="translate(1567.6,688) scale(0.9,1)" font-size="18" text-anchor="middle">Yellow</text>
<text transform="translate(1626,688) scale(0.9,1)" font-size="18" text-anchor="start">100W</text>
<text transform="translate(1007,721.4) scale(0.85,1)" font-weight="700">x: CIE31</text>
<text transform="translate(1091.5,721.4) scale(0.85,1)">0,3063</text>
<text transform="translate(1169.5,721.4) scale(0.85,1)">0,6496</text>
<text transform="translate(1237.8,721.4) scale(0.85,1)">0,2996</text>
<text transform="translate(1315.7,721.4) scale(0.85,1)">0,1522</text>
<text transform="translate(1384.0,721.4) scale(0.85,1)">0,2224</text>
<text transform="translate(1462.0,721.4) scale(0.85,1)">0,3110</text>
<text transform="translate(1533.5,721.4) scale(0.85,1)">0,4155</text>
<text transform="translate(1610.6,721.4) scale(0.85,1)">0,3063</text>
<text transform="translate(1007,752.3) scale(0.85,1)" font-weight="700">y: CIE31</text>
<text transform="translate(1091.5,752.3) scale(0.85,1)">0,3248</text>
<text transform="translate(1169.5,752.3) scale(0.85,1)">0,3313</text>
<text transform="translate(1237.8,752.3) scale(0.85,1)">0,6042</text>
<text transform="translate(1315.7,752.3) scale(0.85,1)">0,0606</text>
<text transform="translate(1384.0,752.3) scale(0.85,1)">0,3230</text>
<text transform="translate(1462.0,752.3) scale(0.85,1)">0,1473</text>
<text transform="translate(1533.5,752.3) scale(0.85,1)">0,5101</text>
<text transform="translate(1610.6,752.3) scale(0.85,1)">0,3248</text>
<text transform="translate(1007,783.2) scale(0.85,1)" font-weight="700">Y</text>
<text transform="translate(1091.5,783.2) scale(0.85,1)">328,8442</text>
<text transform="translate(1169.5,783.2) scale(0.85,1)">65,0253</text>
<text transform="translate(1237.8,783.2) scale(0.85,1)">234,5518</text>
<text transform="translate(1315.7,783.2) scale(0.85,1)">24,8931</text>
<text transform="translate(1384.0,783.2) scale(0.85,1)">259,7383</text>
<text transform="translate(1462.0,783.2) scale(0.85,1)">90,0717</text>
<text transform="translate(1533.5,783.2) scale(0.85,1)">302,8071</text>
<text transform="translate(1610.6,783.2) scale(0.85,1)">627,8100</text>
<text transform="translate(1007,814.1) scale(0.85,1)" font-weight="700">Target Y</text>
<text transform="translate(1091.5,814.1) scale(0.85,1)">327,0883</text>
<text transform="translate(1169.5,814.1) scale(0.85,1)">69,5573</text>
<text transform="translate(1237.8,814.1) scale(0.85,1)">233,9199</text>
<text transform="translate(1315.7,814.1) scale(0.85,1)">23,6111</text>
<text transform="translate(1384.0,814.1) scale(0.85,1)">257,5310</text>
<text transform="translate(1462.0,814.1) scale(0.85,1)">93,1683</text>
<text transform="translate(1533.5,814.1) scale(0.85,1)">303,4772</text>
<text transform="translate(1610.6,814.1) scale(0.85,1)">627,0883</text>
<text transform="translate(1007,845.0) scale(0.85,1)" font-weight="700">ΔE 2000</text>
<text transform="translate(1091.5,845.0) scale(0.85,1)">2,6256</text>
<text transform="translate(1169.5,845.0) scale(0.85,1)">1,9669</text>
<text transform="translate(1237.8,845.0) scale(0.85,1)">0,2962</text>
<text transform="translate(1315.7,845.0) scale(0.85,1)">0,6391</text>
<text transform="translate(1384.0,845.0) scale(0.85,1)">1,3106</text>
<text transform="translate(1462.0,845.0) scale(0.85,1)">1,2335</text>
<text transform="translate(1533.5,845.0) scale(0.85,1)">1,1373</text>
<text transform="translate(1610.6,845.0) scale(0.85,1)">3,2000</text>
<text transform="translate(1007,875.9) scale(0.85,1)" font-weight="700">ΔE ITP</text>
<text transform="translate(1091.5,875.9) scale(0.85,1)">3,8804</text>
<text transform="translate(1169.5,875.9) scale(0.85,1)">0,8436</text>
<text transform="translate(1237.8,875.9) scale(0.85,1)">1,8715</text>
<text transform="translate(1315.7,875.9) scale(0.85,1)">6,0476</text>
<text transform="translate(1384.0,875.9) scale(0.85,1)">2,3021</text>
<text transform="translate(1462.0,875.9) scale(0.85,1)">6,4644</text>
<text transform="translate(1533.5,875.9) scale(0.85,1)">3,0633</text>
<text transform="translate(1610.6,875.9) scale(0.85,1)">3,6000</text>
</g>
<rect x="1628" y="697.6" width="16.7" height="170.8" fill="#5c5c5c"/>
<rect x="1629.5" y="699" width="14" height="17" rx="3" fill="#6e6e6e" stroke="#7a7a7a" stroke-width="0.8"/>
<path d="M1631.5 712 L1636.5 705.5 L1641.5 712 Z" fill="#3a3a3a"/>
<rect x="1630" y="720.5" width="13" height="104" rx="6" fill="#444"/>
<rect x="1629.5" y="850.5" width="14" height="16" rx="3" fill="#6e6e6e" stroke="#7a7a7a" stroke-width="0.8"/>
<path d="M1631.5 855.5 L1636.5 862 L1641.5 855.5 Z" fill="#3a3a3a"/>
<rect x="994.2" y="868.4" width="634" height="18" fill="#5a5a5a"/>
<rect x="1628" y="868.4" width="16.7" height="18" fill="#3a3a3a"/>
<rect x="995.5" y="869.5" width="14" height="16" rx="3" fill="#6a6a6a" stroke="#777" stroke-width="0.8"/>
<path d="M1005 872.5 L999.5 877.5 L1005 882.5 Z" fill="#333"/>
<rect x="1013.5" y="870.2" width="546" height="14.6" rx="7.3" fill="#474747"/>
<rect x="1612" y="869.5" width="14" height="16" rx="3" fill="#6a6a6a" stroke="#777" stroke-width="0.8"/>
<path d="M1616.5 872.5 L1622 877.5 L1616.5 882.5 Z" fill="#333"/>
</svg>
<div class="abs" style="left:0.0px;top:932px;width:155.3px;height:80px;border-radius:6px;background:linear-gradient(#a9a9a9,#8a8a8a 30%,#606060 75%,#575757)"></div>
<div class="abs" style="left:5.5px;top:938px;width:143.5px;height:45px;border-radius:6px;background:#c0c0c0;box-shadow:inset 2px 2px 2px rgba(0,0,0,.35), 0 0 0 1px rgba(0,0,0,.12)"></div>
<div class="abs t" style="left:0.0px;top:990px;width:155px;text-align:center;font-size:13.5px;font-weight:700;color:#2a2a2a">White</div>
<div class="abs" style="left:157.9px;top:932px;width:155.3px;height:80px;border-radius:6px;background:linear-gradient(#a9a9a9,#8a8a8a 30%,#606060 75%,#575757)"></div>
<div class="abs" style="left:163.4px;top:938px;width:143.5px;height:45px;border-radius:6px;background:#c00000;box-shadow:inset 2px 2px 2px rgba(0,0,0,.35), 0 0 0 1px rgba(0,0,0,.12)"></div>
<div class="abs t" style="left:157.9px;top:990px;width:155px;text-align:center;font-size:13.5px;font-weight:700;color:#2a2a2a">Red</div>
<div class="abs" style="left:315.7px;top:932px;width:155.3px;height:80px;border-radius:6px;background:linear-gradient(#a9a9a9,#8a8a8a 30%,#606060 75%,#575757)"></div>
<div class="abs" style="left:321.2px;top:938px;width:143.5px;height:45px;border-radius:6px;background:#00c000;box-shadow:inset 2px 2px 2px rgba(0,0,0,.35), 0 0 0 1px rgba(0,0,0,.12)"></div>
<div class="abs t" style="left:315.7px;top:990px;width:155px;text-align:center;font-size:13.5px;font-weight:700;color:#2a2a2a">Green</div>
<div class="abs" style="left:473.6px;top:932px;width:155.3px;height:80px;border-radius:6px;background:linear-gradient(#a9a9a9,#8a8a8a 30%,#606060 75%,#575757)"></div>
<div class="abs" style="left:479.1px;top:938px;width:143.5px;height:45px;border-radius:6px;background:#0000c0;box-shadow:inset 2px 2px 2px rgba(0,0,0,.35), 0 0 0 1px rgba(0,0,0,.12)"></div>
<div class="abs t" style="left:473.6px;top:990px;width:155px;text-align:center;font-size:13.5px;font-weight:700;color:#2a2a2a">Blue</div>
<div class="abs" style="left:631.5px;top:932px;width:155.3px;height:80px;border-radius:6px;background:linear-gradient(#a9a9a9,#8a8a8a 30%,#606060 75%,#575757)"></div>
<div class="abs" style="left:637.0px;top:938px;width:143.5px;height:45px;border-radius:6px;background:#00c0c0;box-shadow:inset 2px 2px 2px rgba(0,0,0,.35), 0 0 0 1px rgba(0,0,0,.12)"></div>
<div class="abs t" style="left:631.5px;top:990px;width:155px;text-align:center;font-size:13.5px;font-weight:700;color:#2a2a2a">Cyan</div>
<div class="abs" style="left:789.4px;top:932px;width:155.3px;height:80px;border-radius:6px;background:linear-gradient(#a9a9a9,#8a8a8a 30%,#606060 75%,#575757)"></div>
<div class="abs" style="left:794.9px;top:938px;width:143.5px;height:45px;border-radius:6px;background:#c000c0;box-shadow:inset 2px 2px 2px rgba(0,0,0,.35), 0 0 0 1px rgba(0,0,0,.12)"></div>
<div class="abs t" style="left:789.4px;top:990px;width:155px;text-align:center;font-size:13.5px;font-weight:700;color:#2a2a2a">Magenta</div>
<div class="abs" style="left:947.2px;top:932px;width:155.3px;height:80px;border-radius:6px;background:linear-gradient(#a9a9a9,#8a8a8a 30%,#606060 75%,#575757)"></div>
<div class="abs" style="left:952.7px;top:938px;width:143.5px;height:45px;border-radius:6px;background:#c0c000;box-shadow:inset 2px 2px 2px rgba(0,0,0,.35), 0 0 0 1px rgba(0,0,0,.12)"></div>
<div class="abs t" style="left:947.2px;top:990px;width:155px;text-align:center;font-size:13.5px;font-weight:700;color:#2a2a2a">Yellow</div>
<div class="abs" style="left:1105.1px;top:932px;width:155.3px;height:80px;border-radius:6px;background:linear-gradient(#1c1c1c,#262626 50%,#343434)"></div>
<div class="abs" style="left:1110.6px;top:938px;width:143.5px;height:45px;border-radius:6px;background:#ffffff;box-shadow:none"></div>
<div class="abs t" style="left:1105.1px;top:990px;width:155px;text-align:center;font-size:13.5px;font-weight:700;color:#ffffff">100W</div>
<div class="abs" style="left:1262px;top:931px;width:4px;height:77px;background:#262626"></div>
<div class="abs" style="left:1264px;top:931px;width:60px;height:24px;border-radius:6px 6px 0 0;background:linear-gradient(#b0b0b0,#8e8e8e)"></div>
<div class="abs" style="left:1264px;top:954px;width:60px;height:1.5px;background:#3c3c3c"></div>
<div class="abs" style="left:1264px;top:955.5px;width:60px;height:53px;background:linear-gradient(#9e9e9e,#7a7a7a)"></div>
<div class="ci" style="left:1285px;top:933.5px;width:19px;height:19px"></div>
<svg class="abs" style="left:1288px;top:938px" width="14" height="9"><path d="M1 8 L7 1.5 L13 8 Z" fill="#333"/></svg>
<div class="abs" style="left:1275px;top:962px;width:38px;height:38px;border:4px solid #202020;border-radius:6px;box-sizing:border-box;background:linear-gradient(#c4c4c4,#b4b4b4 50%,#8a8a8a 50%,#9a9a9a)"></div>
<div class="abs" style="left:1286px;top:973px;width:17px;height:17px;background:linear-gradient(#1c1c1c 50%,#000 50%)"></div>
<div class="abs" style="left:1325px;top:931px;width:58px;height:38px;background:linear-gradient(#b2b2b2,#939393 45%,#727272)"></div>
<div class="ci" style="left:1341.5px;top:938px;width:25px;height:25px"></div>
<div class="abs" style="left:1384px;top:931px;width:55px;height:38px;background:linear-gradient(#b2b2b2,#939393 45%,#727272)"></div>
<div class="ci" style="left:1399.0px;top:938px;width:25px;height:25px"></div>
<div class="abs" style="left:1439.5px;top:931px;width:55.5px;height:38px;background:linear-gradient(#7a7a7a,#666 50%,#555)"></div>
<div class="ci" style="left:1454.75px;top:938px;width:25px;height:25px"></div>
<div class="abs" style="left:1497px;top:931px;width:55px;height:38px;background:linear-gradient(#b2b2b2,#939393 45%,#727272)"></div>
<div class="ci" style="left:1512.0px;top:938px;width:25px;height:25px"></div>
<div class="abs" style="left:1553px;top:931px;width:55px;height:38px;background:linear-gradient(#b2b2b2,#939393 45%,#727272)"></div>
<div class="ci" style="left:1568.0px;top:938px;width:25px;height:25px"></div>
<div class="abs" style="left:1382.8px;top:931px;width:1.2px;height:38px;background:#3a3a3a"></div>
<div class="abs" style="left:1494.8px;top:931px;width:2.2px;height:38px;background:#3a3a3a"></div>
<div class="abs" style="left:1551.8px;top:931px;width:1.2px;height:38px;background:#3a3a3a"></div>
<div class="abs" style="left:1349.5px;top:945.5px;width:9.5px;height:9.5px;background:#333"></div>
<svg class="abs" style="left:1400px;top:940px" width="24" height="22"><path d="M8.5 4 L19 11 L8.5 18 Z" fill="#333"/></svg>
<svg class="abs" style="left:1452px;top:938px" width="30" height="26"><path d="M6 5 H3.5 V19 H6 M24 5 H26.5 V19 H24" fill="none" stroke="#3a3a3a" stroke-width="2.2"/><path d="M10 12 H20" stroke="#3a3a3a" stroke-width="1.6"/><path d="M9 12 L12 9.5 V14.5 Z M21 12 L18 9.5 V14.5 Z" fill="#3a3a3a"/></svg>
<svg class="abs" style="left:1510px;top:938px" width="30" height="26"><path d="M15 12 C12 8 7.5 8 7.5 12 C7.5 16 12 16 15 12 C18 8 22.5 8 22.5 12 C22.5 16 18 16 15 12 Z" fill="none" stroke="#3a3a3a" stroke-width="2.3"/></svg>
<svg class="abs" style="left:1566px;top:937px" width="30" height="28"><path d="M8 13 A7 7 0 0 1 20 9" fill="none" stroke="#3a3a3a" stroke-width="2.6"/><path d="M22 15 A7 7 0 0 1 10 19" fill="none" stroke="#3a3a3a" stroke-width="2.6"/><path d="M17 5.5 L23 6 L22 12 Z M13 22.5 L7 22 L8 16 Z" fill="#3a3a3a"/></svg>
<div class="abs" style="left:1325px;top:970px;width:170px;height:40px;background:linear-gradient(#b2b2b2,#939393 45%,#727272)"></div>
<div class="abs" style="left:1497px;top:970px;width:172px;height:40px;background:linear-gradient(#b2b2b2,#939393 45%,#727272)"></div>
<div class="abs" style="left:1494.8px;top:969px;width:2.2px;height:40px;background:#3a3a3a"></div>
<div class="abs" style="left:1325px;top:969px;width:342px;height:1.2px;background:#3a3a3a"></div>
<div class="ci" style="left:1351.5px;top:976.5px;width:25px;height:25px"></div>
<div class="ci" style="left:1618px;top:976.5px;width:25px;height:25px"></div>
<svg class="abs" style="left:1351.5px;top:976.5px" width="25" height="25"><path d="M12 7 L7 12.5 L12 18 M17 7 L12 12.5 L17 18" fill="none" stroke="#333" stroke-width="2.2"/></svg>
<svg class="abs" style="left:1618px;top:976.5px" width="25" height="25"><path d="M8 7 L13 12.5 L8 18 M13 7 L18 12.5 L13 18" fill="none" stroke="#333" stroke-width="2.2"/></svg>
<div class="abs t" style="left:1397px;top:973px;font-size:28px;font-weight:700;color:#2e2e2e;line-height:34px;transform:scaleX(0.93);transform-origin:left">Back</div>
<div class="abs t" style="left:1530px;top:973px;font-size:28px;font-weight:700;color:#2e2e2e;line-height:34px;transform:scaleX(1.06);transform-origin:left">Next</div>
<svg class="abs" style="left:1613px;top:926px" width="46" height="46"><g transform="translate(22.4,22.8)" stroke-linecap="round"><g stroke="#1a0000" stroke-width="7" opacity="0.55" transform="translate(1.2,1.5)"><path d="M0 -13.6 V13.6 M-11.8 -6.8 L11.8 6.8 M-11.8 6.8 L11.8 -6.8"/></g><g stroke="#e60000" stroke-width="6.6"><path d="M0 -13.6 V13.6 M-11.8 -6.8 L11.8 6.8 M-11.8 6.8 L11.8 -6.8"/></g></g></svg>
<div class="abs" style="left:1657px;top:38px;width:10px;height:970px;background:linear-gradient(90deg,rgba(0,0,0,0),rgba(0,0,0,0.12) 40%,rgba(0,0,0,0.62))"></div>
<script>
(function(){
var XY=[[380,.1741,.0050],[400,.1733,.0048],[410,.1726,.0048],[420,.1714,.0051],[425,.1703,.0058],[430,.1689,.0069],[435,.1669,.0086],[440,.1644,.0109],[445,.1611,.0138],[450,.1566,.0177],[455,.1510,.0227],[460,.1440,.0297],[465,.1355,.0399],[470,.1241,.0578],[475,.1096,.0868],[480,.0913,.1327],[485,.0687,.2007],[490,.0454,.2950],[495,.0235,.4127],[500,.0082,.5384],[505,.0039,.6548],[510,.0139,.7502],[515,.0389,.8120],[520,.0743,.8338],[525,.1142,.8262],[530,.1547,.8059],[535,.1929,.7816],[540,.2296,.7543],[545,.2658,.7243],[550,.3016,.6923],[555,.3373,.6589],[560,.3731,.6245],[565,.4087,.5896],[570,.4441,.5547],[575,.4788,.5202],[580,.5125,.4866],[585,.5448,.4544],[590,.5752,.4242],[595,.6029,.3965],[600,.6270,.3725],[605,.6482,.3514],[610,.6658,.3340],[620,.6915,.3083],[630,.7079,.2920],[640,.7190,.2809],[660,.7300,.2700],[700,.7347,.2653]];
function toUV(x,y){var d=-2*x+12*y+3;return [4*x/d,9*y/d];}
var poly=XY.map(function(p){return toUV(p[1],p[2]);});
function inPoly(u,v){var c=false;for(var i=0,j=poly.length-1;i<poly.length;j=i++){var a=poly[i],b=poly[j];if(((a[1]>v)!=(b[1]>v))&&(u<(b[0]-a[0])*(v-a[1])/(b[1]-a[1])+a[0]))c=!c;}return c;}
function rgbOf(x,y){
  var X=x/y,Y=1,Z=(1-x-y)/y;
  var r=3.2406*X-1.5372*Y-0.4986*Z, g=-0.9689*X+1.8758*Y+0.0415*Z, b=0.0557*X-0.2040*Y+1.0570*Z;
  return [r,g,b];
}
function lin(c){return Math.max(0,Math.min(1,c));}
function gam(c){c=Math.max(0,Math.min(1,c));return c<=0.0031308?12.92*c:1.055*Math.pow(c,1/2.4)-0.055;}
var R709=toUV(.64,.33),G709=toUV(.30,.60),B709=toUV(.15,.06);
function side(p,a,b){return (b[0]-a[0])*(p[1]-a[1])-(b[1]-a[1])*(p[0]-a[0]);}
function inTri(u,v){var p=[u,v];var s1=side(p,R709,G709),s2=side(p,G709,B709),s3=side(p,B709,R709);return (s1>=0&&s2>=0&&s3>=0)||(s1<=0&&s2<=0&&s3<=0);}
// CIE 1976
var cv=document.getElementById('cv76');
if(cv&&cv.getContext){
  var W=640,H=492,ctx=cv.getContext('2d');var im=ctx.createImageData(W,H);var d=im.data;
  var SX=1067.5,SY=820.2,OX=0,OY=613.6-121.5;
  function colAt(u,v){
    var den=6*u-16*v+12;var x=9*u/den,y=4*v/den;
    var c=rgbOf(x,y);var r=Math.max(c[0],0),g=Math.max(c[1],0),b=Math.max(c[2],0);var m=Math.max(r,g,b)||1;
    var f=inTri(u,v)?1.0:0.6;
    return [lin(r/m)*255*f,lin(g/m)*255*f,lin(b/m)*255*f];
  }
  var offs=[[0.25,0.25],[0.75,0.25],[0.25,0.75],[0.75,0.75]];
  for(var py=0;py<H;py++){for(var px=0;px<W;px++){
    var k=(py*W+px)*4;var R=0,G=0,B=0,n=0;
    for(var s=0;s<4;s++){
      var u=(px+offs[s][0]-OX)/SX, v=(OY-(py+offs[s][1]))/SY;
      if(!inPoly(u,v))continue;
      var c=colAt(u,v);R+=c[0];G+=c[1];B+=c[2];n++;
    }
    if(n===0){d[k+3]=0;continue;}
    d[k]=Math.round(R/n);d[k+1]=Math.round(G/n);d[k+2]=Math.round(B/n);d[k+3]=Math.round(255*n/4);
  }}
  ctx.putImageData(im,0,0);
  var fb=document.getElementById('fb76'); if(fb) fb.setAttribute('display','none');
}
// CIE 1931 xy zoom
var cv2=document.getElementById('cv31');
if(cv2&&cv2.getContext){
  var W2=342,H2=198,ctx2=cv2.getContext('2d');var im2=ctx2.createImageData(W2,H2);var d2=im2.data;
  var cx=805.5-635.4, cy=777.2-679.3, K=0.1;
  for(var py=0;py<H2;py++){for(var px=0;px<W2;px++){
    var x=0.3127+(px-cx)/170*0.1, y=0.329-(py-cy)/99*0.12;
    var c=rgbOf(x,y);var r=Math.max(c[0],0),g=Math.max(c[1],0),b=Math.max(c[2],0);var m=Math.max(r,g,b)||1;
    r/=m;g/=m;b/=m;
    var k=(py*W2+px)*4;
    var s=0.47;
    d2[k]=Math.round((1-s+s*gam(r))*255);d2[k+1]=Math.round((1-s+s*gam(g))*255);d2[k+2]=Math.round((1-s+s*gam(b))*255);d2[k+3]=255;
  }}
  ctx2.putImageData(im2,0,0);
}
})();

</script>
</body></html>
